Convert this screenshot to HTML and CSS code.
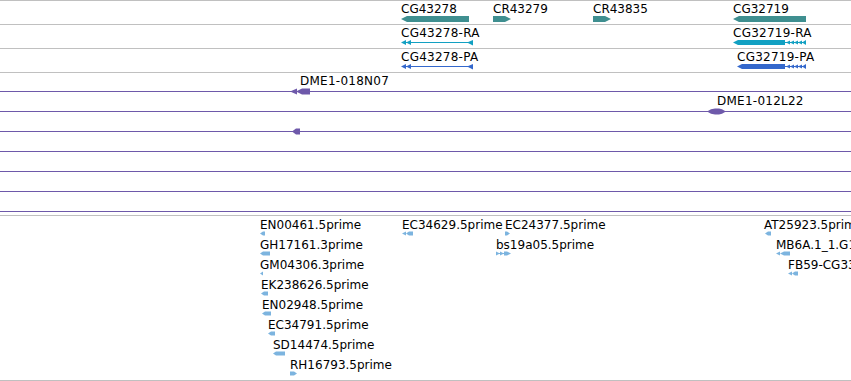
FILE: index.html
```html
<!DOCTYPE html>
<html>
<head>
<meta charset="utf-8">
<title>Genome tracks</title>
<link rel="stylesheet" href="styles.css">
</head>
<body>
<div class="panel">
  <div class="track track-row">
    <svg width="851" height="23" viewBox="0 0 851 23">
      <text class="lbl" x="401" y="12">CG43278</text>
      <text class="lbl" x="493" y="12">CR43279</text>
      <text class="lbl" x="593" y="12">CR43835</text>
      <text class="lbl" x="733" y="12">CG32719</text>
      <polygon class="gene" points="401,18 407,15 469,15 469,21 407,21"/>
      <polygon class="gene" points="493,15 505,15 511,18 505,21 493,21"/>
      <polygon class="gene" points="593,15 605,15 611,18 605,21 593,21"/>
      <polygon class="gene" points="733,18 739,15 806,15 806,21 739,21"/>
    </svg>
  </div>
  <div class="track track-row">
    <svg width="851" height="23" viewBox="0 0 851 23">
      <text class="lbl lbl-wide" x="401" y="12">CG43278-RA</text>
      <text class="lbl lbl-wide" x="733" y="12">CG32719-RA</text>
      <g class="rna">
        <rect x="404" y="17" width="68" height="1"/>
        <polygon points="401,17.5 406,15 406,20"/>
        <polygon points="406,17.5 411,15 411,20"/>
        <polygon points="467,17.5 473,15 473,20.5"/>
        <polygon points="733,17.5 738,15 785,15 785,20 738,20"/>
        <rect x="785" y="17" width="21" height="1"/>
        <polygon points="786,17.5 790,15.5 790,19.5"/>
        <polygon points="790,17.5 794,15.5 794,19.5"/>
        <polygon points="794,17.5 798,15.5 798,19.5"/>
        <polygon points="798,17.5 802,15.5 802,19.5"/>
        <polygon points="802,17.5 806,15 806,20"/>
      </g>
    </svg>
  </div>
  <div class="track track-row">
    <svg width="851" height="23" viewBox="0 0 851 23">
      <text class="lbl lbl-wide" x="401" y="12">CG43278-PA</text>
      <text class="lbl lbl-wide" x="737" y="12">CG32719-PA</text>
      <g class="prot">
        <rect x="404" y="17" width="68" height="1"/>
        <polygon points="401,17.5 406,15 406,20"/>
        <polygon points="406,17.5 411,15 411,20"/>
        <polygon points="467,17.5 473,15 473,20.5"/>
        <polygon points="737,17.5 742,15 785,15 785,20 742,20"/>
        <rect x="785" y="17" width="21" height="1"/>
        <polygon points="786,17.5 790,15.5 790,19.5"/>
        <polygon points="790,17.5 794,15.5 794,19.5"/>
        <polygon points="794,17.5 798,15.5 798,19.5"/>
        <polygon points="798,17.5 802,15.5 802,19.5"/>
        <polygon points="802,17.5 806,15 806,20"/>
      </g>
    </svg>
  </div>
  <div class="track track-clones">
    <svg width="851" height="142" viewBox="0 0 851 142">
      <g class="clone">
        <rect x="0" y="18" width="851" height="1"/>
        <rect x="0" y="38" width="851" height="1"/>
        <rect x="0" y="58" width="851" height="1"/>
        <rect x="0" y="78" width="851" height="1"/>
        <rect x="0" y="98" width="851" height="1"/>
        <rect x="0" y="118" width="851" height="1"/>
        <rect x="0" y="138" width="851" height="1"/>
        <polygon points="290,18.5 297,15.5 297,21.5"/>
        <polygon points="296,18.5 302,15.5 310,15.5 310,21.5 302,21.5"/>
        <polygon points="707,38.5 711,36.2 715,35.5 719,35.5 722,36.2 726,38.5 722,40.8 719,41.5 715,41.5 711,40.8"/>
        <polygon points="292,58.5 296,55.5 300,55.5 300,61.5 296,61.5"/>
      </g>
      <text class="lbl lbl-wide" x="300" y="11.5">DME1-018N07</text>
      <text class="lbl lbl-wide" x="717" y="31.5">DME1-012L22</text>
    </svg>
  </div>
  <div class="track track-est">
    <svg width="851" height="164" viewBox="0 0 851 164">
      <text class="lbl" x="260" y="13">EN00461.5prime</text>
      <text class="lbl" x="260" y="33">GH17161.3prime</text>
      <text class="lbl" x="260" y="53">GM04306.3prime</text>
      <text class="lbl" x="261" y="73">EK238626.5prime</text>
      <text class="lbl" x="262" y="93">EN02948.5prime</text>
      <text class="lbl" x="268" y="113">EC34791.5prime</text>
      <text class="lbl" x="273" y="133">SD14474.5prime</text>
      <text class="lbl" x="290" y="153">RH16793.5prime</text>
      <text class="lbl" x="402" y="13">EC34629.5prime</text>
      <text class="lbl" x="505" y="13">EC24377.5prime</text>
      <text class="lbl" x="496" y="33">bs19a05.5prime</text>
      <text class="lbl" x="764" y="13">AT25923.5prime</text>
      <text class="lbl" x="776" y="33">MB6A.1_1.G1.5prime</text>
      <text class="lbl" x="788" y="53">FB59-CG33.5prime</text>
      <g class="est">
        <polygon points="260,17.5 263,15.5 265,15.5 265,19.5 263,19.5"/>
        <polygon points="260,37.5 263,35.5 270,35.5 270,39.5 263,39.5"/>
        <polygon points="260,57.5 263,55.5 263,59.5"/>
        <polygon points="261,77.5 264,75.5 268,75.5 268,79.5 264,79.5"/>
        <polygon points="262,97.5 265,95.5 271,95.5 271,99.5 265,99.5"/>
        <polygon points="268,117.5 271,115.5 275,115.5 275,119.5 271,119.5"/>
        <polygon points="273,137.5 276,135.5 285,135.5 285,139.5 276,139.5"/>
        <polygon points="290,155.5 294,155.5 297,157.5 294,159.5 290,159.5"/>
        <polygon points="402,17.5 406,15.5 406,19.5"/>
        <polygon points="406,17.5 409,15.5 413,15.5 413,19.5 409,19.5"/>
        <polygon points="505,15.5 507,15.5 510,17.5 507,19.5 505,19.5"/>
        <polygon points="496,35.5 500,37.5 496,39.5"/>
        <polygon points="500,35.5 504,37.5 500,39.5"/>
        <polygon points="504,35.5 507,35.5 511,37.5 507,39.5 504,39.5"/>
        <rect x="496" y="37" width="12" height="1"/>
        <polygon points="765,17.5 768,15.5 771,15.5 771,19.5 768,19.5"/>
        <polygon points="776,37.5 780,35.5 780,39.5"/>
        <polygon points="780,37.5 784,35.5 790,35.5 790,39.5 784,39.5"/>
        <polygon points="788,57.5 792,55.5 792,59.5"/>
        <polygon points="792,57.5 795,55.5 798,55.5 798,59.5 795,59.5"/>
      </g>
    </svg>
  </div>
</div>
</body>
</html>
```

FILE: styles.css
```css
html, body {
  margin: 0;
  padding: 0;
  background: #ffffff;
}

.panel {
  width: 851px;
  display: flex;
  flex-direction: column;
}

.track {
  border-top: 1px solid #c0c0c0;
  overflow: hidden;
}

.track:last-child {
  border-bottom: 1px solid #c0c0c0;
}

.track svg {
  display: block;
}

.track-row {
  height: 23px;
}

.track-clones {
  height: 142px;
}

.track-est {
  height: 164px;
}

.lbl {
  font-family: "DejaVu Sans", "Bitstream Vera Sans", sans-serif;
  font-size: 12px;
  fill: #000000;
}

.lbl-wide {
  letter-spacing: 0.25px;
}

.gene {
  fill: #3f8f90;
}

.rna {
  fill: #12a0c2;
}

.prot {
  fill: #3468cc;
}

.clone {
  fill: #6e59aa;
}

.est {
  fill: #7cb4df;
}
```
